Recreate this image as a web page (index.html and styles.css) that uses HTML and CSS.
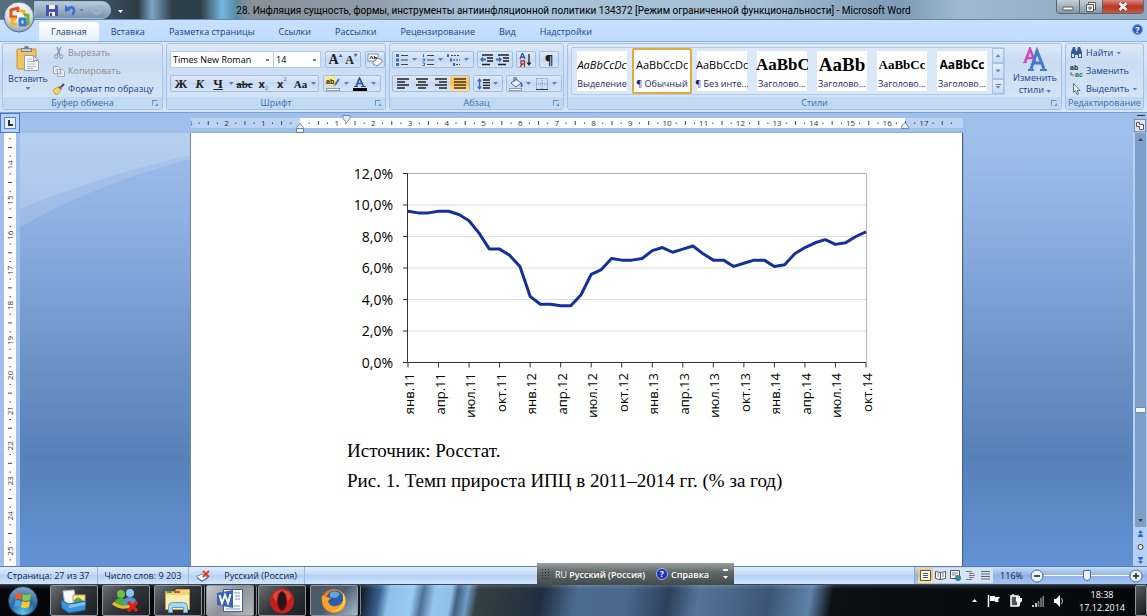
FILE: index.html
```html
<!DOCTYPE html>
<html lang="ru">
<head>
    <meta charset="UTF-8">
    <meta name="viewport" content="width=device-width, initial-scale=1.0">
    <title>Microsoft Word</title>
    <link rel="stylesheet" href="styles.css">
</head>
<body>

    <header class="titlebar">
        <div class="quick-access">
            <button aria-label="Сохранить"><svg width="12" height="12" viewBox="0 0 12 12"><path fill="#4a50b0" d="M0 1h11l1 1v10H0z"/><path fill="#f4f6ff" d="M3 1h6v4H3zM3 8h6v4H3z"/><path fill="#39408f" d="M4 9h2v3H4z"/></svg></button>
            <button aria-label="Отменить"><svg width="12" height="12" viewBox="0 0 12 12"><path fill="none" stroke="#3a6fd0" stroke-width="2.500" d="M3 4.500c5-3 8 0 4.500 6.500"/><path fill="#3a6fd0" d="M0 1v7l6-2z"/></svg></button>
            <span class="arrow"></span>
            <button aria-label="Повторить"><svg width="12" height="12" viewBox="0 0 12 12"><path fill="none" stroke="#9fb3c9" stroke-width="2" d="M9 3a4 4 0 1 1-6 0"/><path fill="#9fb3c9" d="M6 1h5v5z"/></svg></button>
        </div>
        <h1>28. Инфляция сущность, формы, инструменты антиинфляционной политики 134372 [Режим ограниченной функциональности] - Microsoft Word</h1>
        <div class="window-buttons">
            <button aria-label="Свернуть"><svg width="12" height="8" viewBox="0 0 12 8"><rect x="1" y="4" width="10" height="3" rx="1" fill="#fff" stroke="#555"/></svg></button>
            <button aria-label="Восстановить"><svg width="12" height="10" viewBox="0 0 12 10"><path fill="#fff" stroke="#555" d="M3.500.5h7v7h-2v2h-7v-7h2z"/><path fill="none" stroke="#555" d="M4 5h2v2H4zM3.500 2.500h5v5"/></svg></button>
            <button class="close" aria-label="Закрыть"><svg width="12" height="9" viewBox="0 0 12 9"><path stroke="#733" stroke-width="4" d="M2.500 1l7 7M9.500 1l-7 7"/><path stroke="#fff" stroke-width="2.500" d="M2.500 1l7 7M9.500 1l-7 7"/></svg></button>
        </div>
        <span class="arrow customize"></span>
        <button class="office-button" aria-label="Office">
            <svg width="32" height="32" viewBox="0 0 32 32">
                <defs><radialGradient id="orb" cx=".5" cy=".3" r=".7"><stop offset="0" stop-color="#fff"/><stop offset=".6" stop-color="#dde3ea"/><stop offset="1" stop-color="#8b9bb0"/></radialGradient></defs>
                <circle cx="16" cy="16" r="15" fill="url(#orb)" stroke="#5d6f88"/>
                <g fill="none" stroke-width="3" stroke-linejoin="round">
                    <path stroke="#e8531c" d="M14 16H8V9l7-2v4"/>
                    <path stroke="#f9b11a" d="M17 10h4v4M13 18H9v5h5"/>
                    <path stroke="#72b32c" d="M21 14h4v9h-3"/>
                    <path stroke="#3b78c8" d="M17 18h5v6h-5z"/>
                </g>
            </svg>
        </button>
    </header>

    <nav class="tabs">
        <a href="#" class="active">Главная</a>
        <a href="#">Вставка</a>
        <a href="#">Разметка страницы</a>
        <a href="#">Ссылки</a>
        <a href="#">Рассылки</a>
        <a href="#">Рецензирование</a>
        <a href="#">Вид</a>
        <a href="#">Надстройки</a>
        <button class="help" aria-label="Справка по Word">?</button>
    </nav>

    <section class="ribbon">
        <div class="group clipboard">
            <div class="group-body">
                <button class="big-button">
                    <svg width="24" height="26" viewBox="0 0 24 26"><rect x="1" y="3" width="19" height="20" rx="1" fill="#f0c363" stroke="#c79636"/><path fill="#7d7f8b" d="M5 2h3l1-2h3l1 2h3v4H5z"/><path fill="#c9ccd6" d="M6 3h9v2H6z"/><path fill="#fff" stroke="#8ba0c2" d="M8.500 9.500h9l5 5v10h-14z"/><path stroke="#9fb2d0" d="M11 13h5M11 15.500h8M11 18h9M11 20.500h9M11 22.500h6"/><path fill="#dbe5f4" stroke="#8ba0c2" d="M17.500 9.500v5h5z"/></svg>
                    <span>Вставить</span>
                    <span class="arrow"></span>
                </button>
                <div class="commands">
                    <button class="disabled"><svg width="12" height="12" viewBox="0 0 12 12"><path fill="none" stroke="#8d99ad" stroke-width="1.400" d="M4 0l3 8M8 0L4 8"/><circle cx="3" cy="9.500" r="1.700" fill="none" stroke="#7f96bd"/><circle cx="8" cy="9.500" r="1.700" fill="none" stroke="#7f96bd"/></svg>Вырезать</button>
                    <button class="disabled"><svg width="12" height="12" viewBox="0 0 12 12"><path fill="#eef2f8" stroke="#9aa9bf" d="M.5 1.500h5l2 2v5h-7zM4.500 4.500h5l2 2v5h-7z"/><path stroke="#b3bfd0" d="M6 7h3M6 9h4M2 4h2M2 6h2"/></svg>Копировать</button>
                    <button><svg width="12" height="12" viewBox="0 0 12 12"><path fill="#f6d55b" stroke="#b78d23" stroke-width=".7" d="M0 7l5-3 3 3-4 5-2-1z"/><path fill="#8c5a9b" d="M5 4l2-1 2 2-1 2z"/><path stroke="#4a4a55" stroke-width="2" d="M8 4l3-3"/></svg>Формат по образцу</button>
                </div>
            </div>
            <h2>Буфер обмена<i class="launcher"></i></h2>
        </div>

        <div class="group font">
            <div class="group-body rows">
                <div class="row">
                    <div class="combo">
                        <select class="font-name" aria-label="Шрифт"><option>Times New Roman</option></select>
                        <select class="font-size" aria-label="Размер шрифта"><option>14</option></select>
                    </div>
                    <div class="tools push">
                        <button class="serif grow" aria-label="Увеличить размер">A<sup>▴</sup></button>
                        <button class="serif shrink" aria-label="Уменьшить размер">A<sup>▾</sup></button>
                    </div>
                    <div class="tools"><button aria-label="Очистить формат"><svg width="16" height="14" viewBox="0 0 16 14"><rect x="1" y="1" width="10" height="7" fill="#fff" stroke="#7d8fb0"/><path fill="none" stroke="#333" d="M3 6l1.500-3L6 6M7.500 3v3h2V4.500h-2"/><path fill="#fff" stroke="#7482a8" d="M6 9l5-4 4 2v2l-5 4-4-2z"/></svg></button></div>
                </div>
                <div class="row">
                    <div class="tools letters">
                        <button class="serif"><b>Ж</b></button>
                        <button class="serif"><b><i>К</i></b></button>
                        <button class="serif"><b><u>Ч</u></b></button>
                        <span class="arrow"></span>
                        <button class="serif small"><b><s>abc</s></b></button>
                        <button class="small"><b>x</b><sub>2</sub></button>
                        <button class="small"><b>x</b><sup>2</sup></button>
                        <button class="serif small"><b>Aa</b></button>
                        <span class="arrow"></span>
                    </div>
                    <div class="tools push">
                        <button aria-label="Цвет выделения"><svg width="15" height="14" viewBox="0 0 15 14"><rect width="9" height="8" fill="#ffef66"/><text x="0" y="7" class="icon-text">ab</text><path stroke="#53679a" stroke-width="2" d="M13 2L9 8"/><path fill="#d99b2b" d="M8 7l2 1-3 2z"/><rect x=".5" y="11.500" width="13" height="2" fill="#fff" stroke="#8f9bb0"/></svg></button>
                        <span class="arrow"></span>
                        <button aria-label="Цвет текста"><svg width="14" height="14" viewBox="0 0 14 14"><path fill="none" stroke="#2a4f9c" stroke-width="1.700" d="M3 9.500L6.500 1 10.500 9.500M4.500 6.500h5"/><path stroke="#2a4f9c" d="M1 9.500h4M8 9.500h5"/><path fill="#000" d="M0 11h14v3H0z"/></svg></button>
                        <span class="arrow"></span>
                    </div>
                </div>
            </div>
            <h2>Шрифт<i class="launcher"></i></h2>
        </div>

        <div class="group paragraph">
            <div class="group-body rows">
                <div class="row">
                    <div class="tools">
                        <button aria-label="Маркеры"><svg width="13" height="12" viewBox="0 0 13 12"><path fill="#3f68b8" d="M0 0h3v3H0zM0 4.500h3v3H0zM0 9h3v3H0z"/><path stroke="#444" d="M5 1.500h7M5 6h7M5 10.500h7"/></svg></button>
                        <span class="arrow"></span>
                        <button aria-label="Нумерация"><svg width="13" height="12" viewBox="0 0 13 12"><path stroke="#3f68b8" fill="none" d="M1.500 0v3M.5 5h2v2h-2M.5 9h2v2.500h-2"/><path stroke="#444" d="M5 1.500h7M5 6h7M5 10.500h7"/></svg></button>
                        <span class="arrow"></span>
                        <button aria-label="Многоуровневый список"><svg width="14" height="12" viewBox="0 0 14 12"><path fill="#3f68b8" d="M0 0h2v3H0zM3 4.500h2v3H3zM6 9h2v3H6z"/><path stroke="#444" stroke-dasharray="2 1" d="M4 1.500h9M6 6h7M9 10.500h4"/></svg></button>
                        <span class="arrow"></span>
                    </div>
                    <div class="tools">
                        <button aria-label="Уменьшить отступ"><svg width="14" height="12" viewBox="0 0 14 12"><path stroke="#222" stroke-width="1.500" d="M2 1h11M7 4h6M7 7h6M2 10.500h8"/><path fill="#3f68b8" d="M0 5.500l3-3v2h3v2H3v2z"/></svg></button>
                        <button aria-label="Увеличить отступ"><svg width="14" height="12" viewBox="0 0 14 12"><path stroke="#222" stroke-width="1.500" d="M2 1h11M7 4h6M7 7h6M2 10.500h8"/><path fill="#3f68b8" d="M6 5.500l-3-3v2H0v2h3v2z"/></svg></button>
                    </div>
                    <div class="tools"><button aria-label="Сортировка"><svg width="14" height="14" viewBox="0 0 14 14"><path fill="none" stroke="#3059ae" stroke-width="1.300" d="M1 6l2.500-6L6 6M2 4h3"/><path fill="none" stroke="#b03434" stroke-width="1.300" d="M5.500 14V8H2v3h3.500M3.500 11L1 14"/><path stroke="#222" stroke-width="1.300" d="M10 1v10"/><path fill="#222" d="M7.500 9.500h5L10 13z"/></svg></button></div>
                    <div class="tools"><button aria-label="Знаки абзаца" class="pilcrow">¶</button></div>
                </div>
                <div class="row">
                    <div class="tools align">
                        <button aria-label="По левому краю"><svg width="12" height="11" viewBox="0 0 12 11"><path stroke="#222" stroke-width="1.500" d="M0 1h12M0 4h8M0 7h12M0 10h8"/></svg></button>
                        <button aria-label="По центру"><svg width="12" height="11" viewBox="0 0 12 11"><path stroke="#222" stroke-width="1.500" d="M0 1h12M2 4h8M0 7h12M2 10h8"/></svg></button>
                        <button aria-label="По правому краю"><svg width="12" height="11" viewBox="0 0 12 11"><path stroke="#222" stroke-width="1.500" d="M0 1h12M4 4h8M0 7h12M4 10h8"/></svg></button>
                        <button aria-label="По ширине" class="pressed"><svg width="12" height="11" viewBox="0 0 12 11"><path stroke="#432" stroke-width="1.500" d="M0 1h12M0 4h12M0 7h12M0 10h12"/></svg></button>
                    </div>
                    <div class="tools">
                        <button aria-label="Междустрочный интервал"><svg width="13" height="12" viewBox="0 0 13 12"><path fill="#3f68b8" d="M2.500 0L5 3.500H3.200v5H5L2.500 12 0 8.500h1.800v-5H0z"/><path stroke="#222" stroke-width="1.300" d="M6 2h7M6 4.700h7M6 7.400h7M6 10h7"/></svg></button>
                        <span class="arrow"></span>
                    </div>
                    <div class="tools">
                        <button aria-label="Заливка"><svg width="15" height="14" viewBox="0 0 15 14"><path fill="#eef3fa" stroke="#51658f" d="M2 6l5-4 5 4-5 4z"/><path fill="none" stroke="#51658f" d="M5 5V0h2v4"/><path fill="#3f68b8" d="M12 5c2 2 2 4 1 5s-2 0-1-4z"/><rect x=".5" y="11.500" width="12" height="2" fill="#fff" stroke="#8f9bb0"/></svg></button>
                        <span class="arrow"></span>
                        <button aria-label="Границы"><svg width="12" height="12" viewBox="0 0 12 12"><path fill="none" stroke="#7a8dad" stroke-dasharray="1 1" d="M.5.5h11v11M.5.5v11M6 0v11M0 6h11"/><path stroke="#333" d="M0 11.500h12"/></svg></button>
                        <span class="arrow"></span>
                    </div>
                </div>
            </div>
            <h2>Абзац<i class="launcher"></i></h2>
        </div>

        <div class="group styles">
            <div class="group-body">
                <div class="gallery">
                    <button><em>AaBbCcDc</em><span>Выделение</span></button>
                    <button class="selected"><strong>AaBbCcDc</strong><span>¶ Обычный</span></button>
                    <button><strong>AaBbCcDc</strong><span>¶ Без инте...</span></button>
                    <button><strong class="h-large">AaBbC</strong><span>Заголово...</span></button>
                    <button><strong class="h-larger">AaBb</strong><span>Заголово...</span></button>
                    <button><strong class="h-serif">AaBbCc</strong><span>Заголово...</span></button>
                    <button><strong class="h-sans">AaBbCc</strong><span>Заголово...</span></button>
                    <div class="gallery-scroll">
                        <button aria-label="Вверх"><span class="arrow up"></span></button>
                        <button aria-label="Вниз"><span class="arrow"></span></button>
                        <button aria-label="Все стили" class="more"><span class="arrow"></span></button>
                    </div>
                </div>
                <button class="big-button change-styles">
                    <svg width="26" height="25" viewBox="0 0 26 25"><path fill="none" stroke="#c94bb5" stroke-width="2.500" d="M3 15L8 2l5 13M5 11h6"/><path stroke="#c94bb5" d="M1 15.500h4"/><path fill="none" stroke="#4778cf" stroke-width="3" d="M9 22L15 4l7 18M11 16h9"/><path stroke="#4778cf" stroke-width="2" d="M6 23h6M18 23h7"/></svg>
                    <span>Изменить</span>
                    <span>стили <i class="arrow"></i></span>
                </button>
            </div>
            <h2>Стили<i class="launcher"></i></h2>
        </div>

        <div class="group editing">
            <div class="group-body">
                <div class="commands">
                    <button><svg width="13" height="12" viewBox="0 0 13 12"><path fill="#3c5a98" d="M1 5l2-5h2l1 4h1l1-4h2l2 5v6H8V8H5v3H1z"/><path fill="#d5e2f5" d="M2 7h2v3H2zM9 7h2v3H9z"/></svg>Найти <span class="arrow"></span></button>
                    <button><svg width="13" height="12" viewBox="0 0 13 12"><text x="0" y="5" class="icon-text">ab</text><text x="5" y="12" class="icon-text green">ac</text><path fill="none" stroke="#4468ac" d="M1 7v3h3"/></svg>Заменить</button>
                    <button><svg width="13" height="12" viewBox="0 0 13 12"><path fill="#fff" stroke="#5d6f90" d="M3.500.5v9l2-2 1.500 4 1.500-.6-1.500-3.400h3z"/></svg>Выделить <span class="arrow"></span></button>
                </div>
            </div>
            <h2>Редактирование</h2>
        </div>
    </section>

    <div class="ruler-row">
        <button class="tab-stop" aria-label="Позиция табуляции"><svg width="12" height="12" viewBox="0 0 12 12"><rect x=".5" y=".5" width="11" height="11" fill="#e6f0fd" stroke="#5c82cc"/><path fill="none" stroke="#333" stroke-width="2" d="M5 3v5h4"/></svg></button>
        <svg id="h-ruler" width="772" height="20" viewBox="0 0 772 20" class="h-ruler"></svg>
        <button class="ruler-toggle" aria-label="Линейка"><svg width="12" height="18" viewBox="0 0 12 18"><path stroke="#333" d="M3 1.500h8"/><rect x=".5" y="5.500" width="11" height="12" fill="#dfe6f0" stroke="#7f8ea8"/><path fill="#fff" stroke="#555" d="M2.500 8.500h3v2h4v5h-4v-3h-3z"/></svg></button>
    </div>

    <main class="workspace">
        <svg id="v-ruler" class="v-ruler" width="20" height="433" viewBox="0 0 20 433"></svg>
        <div class="desk">
            <svg class="swoosh" width="171" height="100" viewBox="0 0 171 100"><path fill="#fff" opacity=".25" d="M0 0h171v22Q80 43 0 76z"/><path fill="#fff" opacity=".12" d="M0 76Q80 43 171 22v4Q80 49 0 94z"/></svg>
            <article class="page">
                <svg id="chart" class="chart" width="540" height="260" viewBox="0 0 540 260" role="img" aria-label="Темп прироста ИПЦ"></svg>
                <p>Источник: Росстат.</p>
                <p>Рис. 1. Темп прироста ИПЦ в 2011–2014 гг. (% за год)</p>
            </article>
        </div>
        <div class="scrollbar">
            <div class="track"><span class="arrow up"></span><span class="thumb"></span><span class="arrow"></span></div>
            <button aria-label="Предыдущая"><svg width="7" height="8" viewBox="0 0 7 8"><path fill="#2f6bd0" d="M3.500 0L6 3H1zM3.500 3L6 6H1zM1 6h5v1H1z"/></svg></button>
            <button aria-label="Выбор объекта"><svg width="7" height="8" viewBox="0 0 7 8"><circle cx="3.500" cy="4" r="2.500" fill="#fff" stroke="#333"/></svg></button>
            <button aria-label="Следующая"><svg width="7" height="8" viewBox="0 0 7 8"><path fill="#2f6bd0" d="M3.500 8L6 5H1zM3.500 5L6 2H1zM1 1h5v1H1z"/></svg></button>
        </div>
    </main>

    <footer class="statusbar">
        <span>Страница: 27 из 37</span>
        <span>Число слов: 9 203</span>
        <span class="language"><svg width="14" height="12" viewBox="0 0 14 12"><path fill="#fff" stroke="#7483a3" d="M.5 6.500L6 4l6 3-6 4z"/><path fill="none" stroke="#5470a8" d="M1 8l5 3.500L12 8"/><path stroke="#df3a22" stroke-width="1.800" d="M7 1l6 6M13 1L7 7"/></svg>Русский (Россия)</span>
        <div class="view-tools">
            <div class="views">
                <button class="pressed" aria-label="Разметка страницы"><svg width="11" height="11" viewBox="0 0 11 11"><path fill="#fff" stroke="#555" d="M.5.5h10v10H.5z"/><path stroke="#555" d="M3 3.500h5M3 5.500h5M3 7.500h5"/></svg></button>
                <button aria-label="Режим чтения"><svg width="11" height="11" viewBox="0 0 11 11"><path fill="#fff" stroke="#555" d="M.5 1.500l5 1 5-1v7l-5 1-5-1zM5.500 2v8"/><path stroke="#777" d="M2 4h2M2 6h2M7 4h2M7 6h2"/></svg></button>
                <button aria-label="Веб-документ"><svg width="11" height="11" viewBox="0 0 11 11"><path fill="#fff" stroke="#555" d="M.5.5h9v8h-9z"/><path stroke="#777" d="M2 3h6M2 5h4"/><circle cx="8" cy="8" r="3" fill="#2f7fb5"/><path fill="#4ca64c" d="M7 6h2v2H7z"/></svg></button>
                <button aria-label="Структура"><svg width="11" height="11" viewBox="0 0 11 11"><path stroke="#777" d="M1 1.500h6M4 3.500h5M4 5.500h6M4 7.500h5M1 9.500h6"/></svg></button>
                <button aria-label="Черновик"><svg width="11" height="11" viewBox="0 0 11 11"><path stroke="#666" stroke-width="1.200" d="M1 1.500h9M1 4h9M1 6.500h9M1 9h9"/></svg></button>
            </div>
            <span class="zoom-value">116%</span>
            <button aria-label="Мельче"><svg width="14" height="14" viewBox="0 0 14 14"><circle cx="7" cy="7" r="6" fill="#eaf2fd" stroke="#556a8d"/><path stroke="#344" stroke-width="1.800" d="M4 7h6"/></svg></button>
            <input type="range" min="0" max="100" value="50" aria-label="Масштаб">
            <button aria-label="Крупнее"><svg width="14" height="14" viewBox="0 0 14 14"><circle cx="7" cy="7" r="6" fill="#eaf2fd" stroke="#556a8d"/><path stroke="#344" stroke-width="1.800" d="M4 7h6M7 4v6"/></svg></button>
        </div>
        <div class="language-bar">
            <span class="grip"></span>
            <span>RU</span>
            <button>Русский (Россия)</button>
            <button class="lang-help"><i>?</i>Справка</button>
            <span class="lang-options"><i></i><span class="arrow"></span></span>
        </div>
    </footer>

    <div class="taskbar">
        <button class="start" aria-label="Пуск">
            <svg width="32" height="30" viewBox="0 0 32 30">
                <defs><radialGradient id="start" cx=".5" cy=".9" r=".9"><stop offset="0" stop-color="#5cc8ee"/><stop offset=".5" stop-color="#27679f"/><stop offset="1" stop-color="#86a9c4"/></radialGradient></defs>
                <circle cx="16" cy="15" r="14.500" fill="url(#start)" stroke="#1d3d5c"/>
                <path fill="#ee5a24" d="M9 8q3-2 6 0l-1 6q-3-2-6 0z"/><path fill="#8cc63e" d="M16 8q3 2 8 0l-1 6q-5 2-8 0z"/><path fill="#4aa3e8" d="M8 15q3-2 6 0l-1 6q-3-2-6 0z"/><path fill="#fdc82f" d="M15 15q3 2 8 0l-1 6q-5 2-8 0z"/>
            </svg>
        </button>
        <button aria-label="Почта"><svg width="28" height="26" viewBox="0 0 28 26"><path fill="#f5f9fd" stroke="#a9bccd" d="M3 3l11-1 2 12-11 4z"/><path fill="#ffe58a" stroke="#c4a55a" d="M13 7h12v9H13z"/><path fill="#5fa546" d="M14 12l4-3 6 4v2H14z"/><path fill="#3d93d8" stroke="#1f66a8" d="M1 12l8 4 17-3-1 9-16 3-7-5z"/><path fill="#84c3f0" d="M9 17l16-3v3L9 20z"/></svg></button>
        <button aria-label="Контакты"><svg width="28" height="26" viewBox="0 0 28 26"><circle cx="9" cy="6" r="4" fill="#6cc04a"/><path fill="#4fa838" d="M2 18q0-8 7-8t7 8z"/><circle cx="18" cy="5" r="4" fill="#8cc4ee"/><path fill="#4f93cf" d="M11 17q0-8 7-8t7 8z"/><path fill="none" stroke="#f1b52c" stroke-width="3" d="M1 15q10 8 22 1"/><path stroke="#d9241c" stroke-width="3.500" d="M16 14l9 9M25 14l-9 9"/></svg></button>
        <button class="stacked" aria-label="Проводник"><svg width="28" height="26" viewBox="0 0 28 26"><path fill="#f1d67c" stroke="#c4a04a" d="M1.500 3.500h9l2-2h13v20h-24z"/><path fill="#3e9e4d" d="M3 3h5v2H3z"/><path fill="#d8452b" d="M10 3h6v2h-6z"/><path fill="#fbeeb0" d="M2 7h23v14H2z"/><path fill="#a9d5ef" stroke="#5d9fc9" d="M4.500 24.500v-6q0-4 4-4h11q4 0 4 4v6h-4v-5h-11v5z"/></svg></button>
        <button class="stacked current" aria-label="Word"><svg width="28" height="26" viewBox="0 0 28 26"><path fill="#fff" stroke="#3a5ca5" d="M7.500 1.500h19v22h-19z"/><path stroke="#7390cb" d="M18 5h6M19 8h5M19 11h5M10 18h14M10 21h14"/><path fill="#3763b8" d="M1 5l16-3v18L1 17z"/><path fill="none" stroke="#fff" stroke-width="2" d="M3.500 7L6 15l3-8 3 8 2.500-9"/></svg></button>
        <button aria-label="Opera"><svg width="28" height="26" viewBox="0 0 28 26"><ellipse cx="14" cy="13" rx="12" ry="12.500" fill="#c3201d"/><ellipse cx="14" cy="8" rx="9" ry="6" fill="#ee6b5b" opacity=".5"/><ellipse cx="14" cy="13" rx="4.500" ry="9.500" fill="#2a1516" stroke="#831110"/></svg></button>
        <button class="stacked last" aria-label="Firefox"><svg width="28" height="26" viewBox="0 0 28 26"><circle cx="14" cy="13" r="12" fill="#ee7a1c"/><circle cx="15" cy="11" r="8.500" fill="#2c5da9"/><path fill="#63a6de" d="M10 5q5-4 10 1l-4 4-6-1z"/><path fill="#f5a02b" d="M2 8q2-1 4 1l5 1-3 3q1 6 8 5 6-1 8-8 3 9-4 13-9 4-15-3Q1 15 2 8z"/><path fill="#fcd04b" d="M23 5q5 8 0 14-5 6-12 4 9-1 12-8z"/></svg></button>
        <div class="tray">
            <span class="arrow up"></span>
            <svg width="13" height="12" viewBox="0 0 13 12"><path stroke="#fff" stroke-width="1.500" d="M1.500 0v12"/><path fill="#fff" d="M3 1h5v1h5l-2 3 1 2H8V6H3z"/></svg>
            <svg width="12" height="13" viewBox="0 0 12 13"><path fill="#555" stroke="#fff" stroke-width="1.500" d="M1 2h7v10H1zM3 0v2"/><path fill="#fff" d="M6 2h1v2h2V2h1v2h2v3l-2 2v3H8V9L6 7z"/></svg>
            <svg width="12" height="12" viewBox="0 0 12 12"><path stroke="#fff" stroke-width="1.500" d="M1 10v2M4 8v4"/><path stroke="#888" stroke-width="1.500" d="M6.500 6v6M9 3v9M11.300 1v11"/></svg>
            <svg width="11" height="12" viewBox="0 0 11 12"><path fill="#fff" d="M0 4h2l4-4v12L2 8H0z"/><path fill="none" stroke="#ccc" d="M7.500 3q2 3 0 6"/></svg>
            <time>18:38<br>17.12.2014</time>
        </div>
        <button class="show-desktop" aria-label="Свернуть все окна"></button>
    </div>

    <script>
        var svgNS = 'http://www.w3.org/2000/svg';

        function add(parent, tag, attrs, text) {
            var el = document.createElementNS(svgNS, tag);
            for (var key in attrs) {
                el.setAttribute(key, attrs[key]);
            }
            if (text !== undefined) {
                el.textContent = text;
            }
            parent.appendChild(el);
            return el;
        }

        // Horizontal ruler, zero is at the left text margin
        function drawHorizontalRuler() {
            var ruler = document.getElementById('h-ruler');
            var cm = 36.7, zero = 109, end = 714;
            add(ruler, 'rect', { x: 0, y: 5, width: 772, height: 10, class: 'ruler-margin' });
            add(ruler, 'rect', { x: zero, y: 5, width: end - zero, height: 10, class: 'ruler-body' });
            for (var q = -12; q <= 82; q++) {
                var x = zero + q * cm / 4;
                if (x > 762) {
                    break;
                }
                if (q % 4 === 0) {
                    if (q !== 0) {
                        add(ruler, 'text', { x: x, y: 13 }, Math.abs(q / 4));
                    }
                } else if (q % 2 === 0) {
                    add(ruler, 'path', { d: 'M' + x + ' 8v4' });
                } else {
                    add(ruler, 'path', { d: 'M' + x + ' 9.500v1.500' });
                }
            }
            add(ruler, 'path', { class: 'marker', d: 'M152 2.500h7v3l-3.500 4-3.500-4z' });
            add(ruler, 'path', { class: 'marker', d: 'M105.500 19.500v-5l3.500-4 3.500 4v5zM105.500 15.500h7' });
            add(ruler, 'path', { class: 'marker', d: 'M710.500 15.500v-2l3.500-4 3.500 4v2z' });
        }

        function drawVerticalRuler() {
            var ruler = document.getElementById('v-ruler');
            var cm = 35.1;
            add(ruler, 'rect', { x: 4, y: 0, width: 12, height: 433, class: 'ruler-body' });
            for (var q = 53; q <= 101; q++) {
                var y = 32 + (q / 4 - 14) * cm;
                if (q % 4 === 0) {
                    add(ruler, 'text', { transform: 'translate(13 ' + y + ') rotate(-90)' }, q / 4);
                } else if (q % 2 === 0) {
                    add(ruler, 'path', { d: 'M8 ' + y + 'h4' });
                } else {
                    add(ruler, 'path', { d: 'M9.500 ' + y + 'h1.500' });
                }
            }
        }

        // Consumer prices, % to the same month of the previous year
        var rates = [
            9.6, 9.5, 9.5, 9.6, 9.6, 9.4, 9.0, 8.2, 7.2, 7.2, 6.8, 6.1,
            4.2, 3.7, 3.7, 3.6, 3.6, 4.3, 5.6, 5.9, 6.6, 6.5, 6.5, 6.6,
            7.1, 7.3, 7.0, 7.2, 7.4, 6.9, 6.5, 6.5, 6.1, 6.3, 6.5, 6.5,
            6.1, 6.2, 6.9, 7.3, 7.6, 7.8, 7.5, 7.6, 8.0, 8.3
        ];
        var months = ['янв', 'апр', 'июл', 'окт'];

        function drawChart() {
            var chart = document.getElementById('chart');
            var left = 68, right = 526, top = 13.5, bottom = 202.5;
            var step = (right - left) / (rates.length - 1);
            var scale = (bottom - top) / 12;
            for (var v = 0; v <= 12; v += 2) {
                var y = bottom - v * scale;
                add(chart, 'path', { class: v === 12 ? 'frame' : 'grid', d: 'M' + left + ' ' + y + 'H' + right });
                add(chart, 'path', { class: 'axis', d: 'M' + (left - 5) + ' ' + y + 'h5' });
                add(chart, 'text', { x: 53, y: y + 5 }, v + ',0%');
            }
            add(chart, 'path', { class: 'frame', d: 'M526.500 ' + top + 'V' + bottom });
            add(chart, 'path', { class: 'axis', d: 'M67.500 ' + top + 'V' + bottom + 'H' + right });
            for (var i = 0; i < rates.length; i += 3) {
                var x = left + i * step;
                var label = months[(i / 3) % 4] + '.' + (11 + Math.floor(i / 12));
                add(chart, 'path', { class: 'axis', d: 'M' + x + ' ' + bottom + 'v5' });
                add(chart, 'text', { class: 'month', transform: 'translate(' + (x + 6) + ' 213) rotate(-90)' }, label);
            }
            var points = rates.map(function (rate, i) {
                return (left + i * step) + ',' + (bottom - rate * scale);
            });
            add(chart, 'polyline', { class: 'line', points: points.join(' ') });
        }

        drawHorizontalRuler();
        drawVerticalRuler();
        drawChart();
    </script>

</body>
</html>
```
FILE: styles.css
```css
* {
    box-sizing: border-box;
}

body {
    display: flex;
    flex-direction: column;
    min-height: 100vh;
    margin: 0;
    background-color: #bfdbff;
    font-family: 'Open Sans', 'Noto Sans', sans-serif;
    font-size: 9px;
    line-height: 12px;
    color: #15428b;
}

button {
    display: flex;
    align-items: center;
    justify-content: center;
    margin: 0;
    padding: 0;
    border: none;
    background: none;
    font: inherit;
    color: inherit;
    white-space: nowrap;
}

svg {
    display: block;
    flex: none;
}

.arrow {
    display: inline-block;
    flex: none;
    width: 5px;
    height: 3px;
    background-color: #5f7fb5;
    clip-path: polygon(0 0, 100% 0, 50% 100%);
}

.arrow.up {
    clip-path: polygon(50% 0, 100% 100%, 0 100%);
}

/* Title bar */
.titlebar {
    position: relative;
    display: grid;
    grid-template-columns: 1fr auto 1fr;
    height: 20px;
    background: linear-gradient(90deg, #54707f 0, #38505e 110px, #2e3b44 138px, #7ba6c6 152px, #30404a 172px, #2c3c46 200px, #74b7e0 222px, #5b8aa6 236px, #87919a 250px, #8e9ca8 370px, #a9c3d8 470px, #a5bfd5 760px, #7d9ab5 900px, #9fb9d0 960px, #8ca6be 100%);
    border-bottom: 1px solid #6b86a5;
}

.titlebar h1 {
    margin: 0;
    font-family: Roboto, 'Open Sans', sans-serif;
    font-size: 10px;
    font-weight: 400;
    line-height: 21px;
    color: #000;
    white-space: nowrap;
}

.quick-access {
    display: flex;
    align-items: center;
    gap: 7px;
    width: 77px;
    height: 18px;
    margin: 1px 0 0 34px;
    padding-left: 11px;
    border: 1px solid #a6bccf;
    border-radius: 0 9px 9px 0;
    background: linear-gradient(#b7cadb, #7893ac);
}

.quick-access .arrow {
    margin: 0 0 0 -5px;
}

.customize {
    position: absolute;
    left: 118px;
    top: 10px;
    background-color: #fff;
}

.office-button {
    position: absolute;
    left: 3px;
    top: 1px;
    z-index: 2;
}

.window-buttons {
    display: flex;
    justify-self: end;
    height: 14px;
    margin-right: 3px;
    border: 1px solid #5b6670;
    border-top: none;
    border-radius: 0 0 4px 4px;
    overflow: hidden;
}

.window-buttons button {
    width: 23px;
    border-right: 1px solid #5b6670;
    background: linear-gradient(#c5ced6, #8497a8);
}

.window-buttons .close {
    width: 40px;
    border: none;
    background: linear-gradient(#d98b80, #b83825 50%, #c65a42);
}

/* Tabs */
.tabs {
    display: flex;
    height: 21px;
    padding: 2px 4px 0 39px;
    background: linear-gradient(#c9e0ff, #bfdbff);
}

.tabs a {
    padding: 0 12px;
    line-height: 19px;
    color: #15428b;
    text-decoration: none;
}

.tabs .active {
    border-radius: 3px 3px 0 0;
    background: linear-gradient(#fff, #e6effb);
}

.help {
    width: 11px;
    height: 11px;
    margin: 2px 0 0 auto;
    border: 1px solid #7fa0d0;
    border-radius: 50%;
    background-color: #2a5fc4;
    color: #fff;
    font-weight: 700;
}

/* Ribbon */
.ribbon {
    display: flex;
    gap: 3px;
    height: 72px;
    padding: 1px 3px 2px 2px;
    border-top: 1px solid #8db2e3;
    border-bottom: 1px solid #7c9fd0;
    background: linear-gradient(#dfeafa, #c5daf5 60%, #d5e6fb);
}

.group {
    display: flex;
    flex: none;
    flex-direction: column;
    overflow: hidden;
    border: 1px solid #a3c2e6;
    border-radius: 3px;
    background: linear-gradient(#dfeaf7, #c9dcf2 25%, #d8e7f8);
}

.group h2 {
    position: relative;
    flex: none;
    margin: 0;
    background-color: #c2d9f2;
    font-size: 9px;
    font-weight: 400;
    line-height: 12px;
    text-align: center;
    color: #3e6aaa;
}

.group-body {
    display: flex;
    flex: 1;
    min-height: 0;
}

.clipboard { width: 161px; }
.font { width: 220px; }
.paragraph { width: 175px; }
.styles { flex: 1; }
.editing { width: 79px; }

.launcher {
    position: absolute;
    right: 4px;
    top: 3px;
    width: 6px;
    height: 6px;
    border: 1px solid #6f91c4;
    border-right-color: transparent;
    border-bottom-color: transparent;
}

.launcher::after {
    content: "";
    position: absolute;
    right: -1px;
    bottom: -1px;
    width: 3px;
    height: 3px;
    background-color: #6f91c4;
    clip-path: polygon(100% 0, 100% 100%, 0 100%);
}

.big-button {
    flex-direction: column;
    justify-content: flex-start;
    width: 50px;
    padding-top: 2px;
    line-height: 12px;
}

.clipboard .big-button span:first-of-type {
    margin: 1px 0 2px;
}

.change-styles {
    padding-top: 3px;
}

.commands {
    display: flex;
    flex-direction: column;
}

.commands button {
    flex: none;
    justify-content: flex-start;
    gap: 3px;
    height: 18px;
}

.disabled {
    color: #8d8d8d;
}

.editing .commands {
    padding-left: 4px;
}

.rows {
    flex-direction: column;
    gap: 7px;
    padding: 7px 4px 0 3px;
}

.row {
    display: flex;
    gap: 4px;
    height: 17px;
}

.paragraph .rows {
    padding: 7px 3px 0 2px;
}

.paragraph .row {
    gap: 3px;
}

.push {
    margin-left: auto;
}

.tools {
    display: flex;
    align-items: center;
    padding: 0 1px;
    border: 1px solid #a1bde2;
    border-radius: 2px;
    background: linear-gradient(#dfebfa, #c6daf3 50%, #d6e5f8);
}

.tools button {
    min-width: 16px;
    height: 15px;
    color: #222;
}

.tools .arrow {
    margin: 0 3px;
}

.paragraph .arrow {
    margin: 0 3px 0 2px;
}

.tools.letters {
    width: 154px;
    justify-content: space-between;
    padding: 0 2px;
}

.letters .arrow {
    margin: 0;
}

.serif {
    font-family: 'Liberation Serif', serif;
    font-size: 13px;
}

.small {
    font-size: 11px;
}

.tools sup,
.tools sub {
    font-size: 6px;
    line-height: 6px;
    color: #2f5fb3;
}

.tools sup {
    align-self: flex-start;
}

.tools sub {
    align-self: flex-end;
}

.grow {
    font-size: 14px;
    font-weight: 700;
}

.shrink {
    font-size: 12px;
    font-weight: 700;
}

.pilcrow {
    font-size: 13px;
    font-weight: 700;
}

.tools.align {
    width: 79px;
    justify-content: space-between;
    padding: 0;
}

.align button {
    width: 19px;
}

.pressed {
    background: linear-gradient(#f7d58a, #fdb850 50%, #ffe78c);
}

.combo {
    display: flex;
    border: 1px solid #b5cdea;
    background-color: #b5cdea;
    gap: 1px;
}

select {
    appearance: none;
    height: 15px;
    padding: 0 2px;
    border: none;
    border-radius: 0;
    background: #fff linear-gradient(#5f7fb5, #5f7fb5) no-repeat right 4px center / 3px 2px;
    font: inherit;
    color: #000;
}

.font-name {
    width: 102px;
}

.font-size {
    width: 46px;
}

.icon-text {
    font-family: 'Liberation Sans', sans-serif;
    font-size: 7px;
    font-weight: 700;
    fill: #222;
}

.green {
    fill: #1c7d2c;
}

/* Style gallery */
.gallery {
    display: flex;
    height: 48px;
    margin: 3px 5px 0 3px;
    border: 1px solid #b3cdec;
    border-radius: 2px;
    background-color: #dbe8f8;
}

.gallery > button {
    flex-direction: column;
    width: 60px;
    padding: 1px 3px;
    overflow: hidden;
    border: 2px solid transparent;
    background: #fff content-box;
    color: #1b1b6b;
}

.gallery > button > :first-child {
    height: 26px;
    max-width: 52px;
    overflow: hidden;
    font-size: 11px;
    font-weight: 400;
    line-height: 26px;
    color: #000;
}

.gallery > .selected {
    border-color: #e8a93a;
    border-radius: 2px;
    background: #fff;
}

.gallery > button > .h-large,
.gallery > button > .h-larger {
    font-family: 'Liberation Serif', serif;
    font-size: 17px;
    font-weight: 700;
}

.gallery > button > .h-larger {
    font-size: 19px;
}

.gallery > button > .h-serif {
    font-family: 'Liberation Serif', serif;
    font-size: 13px;
    font-weight: 700;
}

.gallery > button > .h-sans {
    font-size: 12px;
    font-weight: 700;
}

.gallery-scroll {
    display: flex;
    flex-direction: column;
    width: 12px;
}

.gallery-scroll button {
    flex: 1;
    border: 1px solid #a9c3e6;
    background: linear-gradient(#e3edfa, #c9dcf4);
}

.gallery-scroll .more {
    flex-direction: column;
    gap: 1px;
}

.gallery-scroll .more::before {
    content: "";
    width: 5px;
    height: 1px;
    background-color: #5f7fb5;
}

/* Rulers */
.ruler-row {
    display: grid;
    grid-template-columns: 20px 1fr 14px;
    justify-items: center;
    align-items: center;
    height: 20px;
    background-color: #a0c0ec;
}

.tab-stop {
    width: 20px;
    height: 20px;
    border: 1px solid #4a76cc;
    background-color: #b7d1f5;
}

.h-ruler text,
.v-ruler text {
    font-size: 8px;
    text-anchor: middle;
    fill: #333;
}

.h-ruler path,
.v-ruler path {
    stroke: #444;
}

.h-ruler .marker {
    fill: #e8eef8;
    stroke: #6e84ab;
}

.ruler-margin {
    fill: #bcd3f5;
}

.ruler-body {
    fill: #fff;
}

.workspace {
    display: flex;
    flex: 1;
    min-height: 433px;
}

.v-ruler {
    background-color: #a0c0ec;
}

.desk {
    position: relative;
    display: flex;
    flex: 1;
    justify-content: center;
    background: linear-gradient(#9fc0ec, #8fb1e2 20%, #7399cd 45%, #5681b8 75%, #6391d6);
}

.swoosh {
    position: absolute;
    left: 0;
    top: 0;
}

.page {
    position: relative;
    width: 771px;
    padding: 27px 0 0 156px;
    background-color: #fff;
    box-shadow: 1px 0 1px #46618c, -1px 0 0 #7089ab;
}

.chart {
    margin-left: -7px;
}

.chart text {
    font-size: 14px;
    text-anchor: end;
    fill: #000;
}

.chart .month {
    font-size: 13px;
}

.grid {
    stroke: #dcdcdc;
}

.frame {
    stroke: #b4b4b4;
}

.axis {
    fill: none;
    stroke: #333;
}

.line {
    fill: none;
    stroke: #14309a;
    stroke-width: 3;
    stroke-linejoin: round;
}

.page p {
    margin: 0;
    font-family: 'Liberation Serif', serif;
    font-size: 19px;
    line-height: 30px;
    color: #000;
}

.chart + p {
    margin-top: 16px;
}

.scrollbar {
    display: flex;
    flex-direction: column;
    width: 14px;
    padding: 0 1px 0 2px;
    background-color: #b5d0f5;
}

.track {
    display: flex;
    flex: 1;
    flex-direction: column;
    align-items: center;
    justify-content: space-between;
    padding: 5px 0;
    background-color: #7f9fcb;
}

.track .arrow {
    background-color: #3d3f55;
}

.track .thumb {
    width: 11px;
    height: 6px;
    margin-top: 160px;
    border: 1px solid #7c8ca8;
    background-color: #f2f5fa;
}

.scrollbar button {
    height: 13px;
}

/* Status bar */
.statusbar {
    position: relative;
    display: flex;
    height: 19px;
    border-top: 1px solid #567db1;
    border-bottom: 1px solid #33475f;
    background: linear-gradient(#e1edfd, #c3d9f7 45%, #b4d0f5 50%, #d3e5fd);
    line-height: 17px;
    color: #0f1f45;
}

.statusbar > span {
    padding: 0 7px;
    border-right: 1px solid #9bb9e2;
}

.statusbar .language {
    display: flex;
    align-items: center;
    gap: 14px;
}

.view-tools {
    display: flex;
    align-items: center;
    margin-left: auto;
    padding: 0 4px 0 3px;
    border-left: 1px solid #8caad4;
    background: linear-gradient(#c6dcfa, #90b3e6 50%, #a5c5f2);
}

.views {
    display: flex;
    background-color: #d6e4f8;
}

.views button {
    width: 15px;
    height: 15px;
}

.zoom-value {
    margin: 0 7px;
}

input[type="range"] {
    appearance: none;
    width: 85px;
    height: 14px;
    margin: 0;
    background: linear-gradient(#fff, #fff) no-repeat center / 100% 1px;
}

input[type="range"]::-webkit-slider-thumb {
    appearance: none;
    width: 8px;
    height: 11px;
    border: 1px solid #556a8d;
    border-radius: 1px 1px 4px 4px;
    background-color: #e6effb;
}

.language-bar {
    position: absolute;
    left: 537px;
    top: -4px;
    display: flex;
    align-items: center;
    width: 197px;
    height: 22px;
    padding: 0 6px 0 4px;
    background: linear-gradient(#9aa0a0, #5d6565 45%, #434b4b);
    color: #fff;
}

.grip {
    width: 8px;
    height: 12px;
    margin-right: 6px;
    background: radial-gradient(circle, #222 1px, transparent 1px) 0 0 / 3px 3px;
}

.language-bar button {
    margin-left: 2px;
    font-weight: 600;
}

.language-bar .lang-help {
    gap: 3px;
    margin-left: 11px;
}

.lang-help i {
    width: 12px;
    height: 12px;
    border: 1px solid #aab6e8;
    border-radius: 50%;
    background-color: #1c2fc0;
    font-style: normal;
    font-weight: 700;
    line-height: 10px;
}

.lang-options {
    display: flex;
    flex-direction: column;
    gap: 5px;
    margin-left: auto;
}

.lang-options i {
    width: 5px;
    height: 2px;
    background-color: #fff;
}

.lang-options .arrow {
    background-color: #fff;
}

/* Windows taskbar */
.taskbar {
    display: flex;
    gap: 4px;
    height: 31px;
    background: linear-gradient(rgba(255, 255, 255, 0.15), transparent 4px),
        linear-gradient(100deg, #05070b 352px, #37618c 375px, #8dbde8 385px, #9accf2 408px, #4d7095 418px, #96c6ee 430px, #90bfe6 446px, #42627f 452px, #6f9ac2 462px, #333f44 472px, #2a363f 510px, #1f2d40 535px, #4c6c92 570px, #4a678c 620px, #2d405c 660px, #557499 690px, #3d5575 760px, #5f83aa 800px, #0b1016 822px, #04060a 100%);
}

.taskbar > button {
    width: 48px;
    border: 1px solid #8f949a;
    border-radius: 2px;
    background: linear-gradient(135deg, #6b6f74, #33373b 45%, #1b1e22);
}

.taskbar > .start {
    width: 46px;
    border: none;
    background: none;
}

.taskbar .stacked {
    box-shadow: 2px 0 0 #15181b, 3px 0 0 #7f858b;
}

.taskbar .current {
    background: linear-gradient(135deg, #c9cdd1, #8b9094 50%, #b5b9bd);
}

.taskbar .last {
    background: linear-gradient(135deg, #4e5860, #4a5d70 50%, #a5bccb);
}

.tray {
    display: flex;
    align-items: center;
    gap: 10px;
    margin-left: auto;
    color: #fff;
}

.tray .arrow {
    background-color: #fff;
}

.tray time {
    margin-left: 4px;
    line-height: 13px;
    text-align: center;
}

.taskbar > .show-desktop {
    width: 12px;
    margin-left: 6px;
    background: linear-gradient(135deg, #555b63, #15191f);
}
```
